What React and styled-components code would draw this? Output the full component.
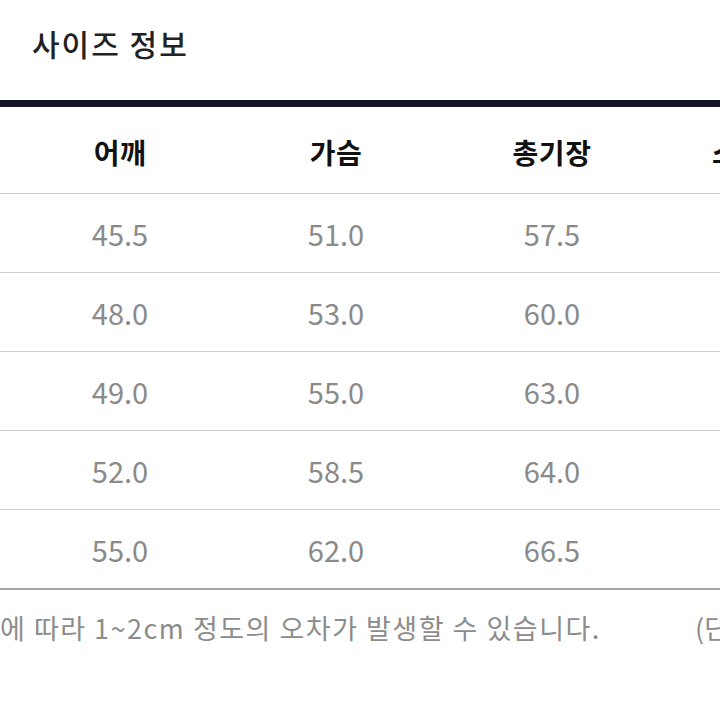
import React from "react";
import styled, { createGlobalStyle } from "styled-components";

const GlobalStyle = createGlobalStyle`
  html, body {
    margin: 0;
    padding: 0;
    background: #ffffff;
  }
  body {
    width: 720px;
    height: 720px;
    overflow: hidden;
    font-family: "Noto Sans CJK KR", "Noto Sans", sans-serif;
  }
`;

const Page = styled.div`
  width: 720px;
  height: 720px;
  overflow: hidden;
  display: flex;
  flex-direction: column;
`;

const Title = styled.h2`
  margin: 0;
  height: 100px;
  box-sizing: border-box;
  padding: 23px 0 0 32px;
  font-size: 30px;
  line-height: 40px;
  font-weight: 500;
  color: #222222;
  letter-spacing: 2px;
`;

const Table = styled.div`
  border-top: 7px solid #14142a;
  border-bottom: 2px solid #a3a3a3;
`;

const Row = styled.div`
  display: grid;
  grid-template-columns: 12px repeat(3, 216px) 1fr;
  height: ${(p) => (p.$head ? "86px" : "79px")};
  border-top: ${(p) => (p.$head ? "none" : "1px solid #cfcfcf")};
  box-sizing: border-box;
  white-space: nowrap;
  overflow: hidden;
`;

const Cell = styled.div`
  display: flex;
  align-items: center;
  justify-content: ${(p) => (p.$edge ? "flex-start" : "center")};
  padding-left: ${(p) => (p.$edge ? "52px" : "0")};
  padding-top: ${(p) => (p.$head ? "3px" : "0")};
  font-size: ${(p) => (p.$head ? "28px" : "29px")};
  font-weight: ${(p) => (p.$head ? 700 : 400)};
  color: ${(p) => (p.$head ? "#111111" : "#8a8a8a")};
  letter-spacing: ${(p) => (p.$head ? "0.5px" : "0")};
`;

const Footer = styled.div`
  display: grid;
  grid-template-columns: 697px 1fr;
  padding-top: 20px;
  font-size: 27px;
  line-height: 36px;
  color: #8c8c8c;
  white-space: nowrap;
  overflow: hidden;
`;

const Notice = styled.span`
  letter-spacing: 1.5px;
`;

const Unit = styled.span`
  margin-left: -2px;
  overflow: hidden;
`;

const heads = ["어깨", "가슴", "총기장"];

const rows = [
  ["45.5", "51.0", "57.5"],
  ["48.0", "53.0", "60.0"],
  ["49.0", "55.0", "63.0"],
  ["52.0", "58.5", "64.0"],
  ["55.0", "62.0", "66.5"],
];

export default function App() {
  return (
    <Page>
      <GlobalStyle />
      <Title>사이즈 정보</Title>
      <Table>
        <Row $head>
          <Cell $head />
          {heads.map((h) => (
            <Cell $head key={h}>
              {h}
            </Cell>
          ))}
          <Cell $head $edge>
            소
          </Cell>
        </Row>
        {rows.map((r, i) => (
          <Row key={i}>
            <Cell />
            {r.map((v, j) => (
              <Cell key={j}>{v}</Cell>
            ))}
            <Cell />
          </Row>
        ))}
      </Table>
      <Footer>
        <Notice>에 따라 1~2cm 정도의 오차가 발생할 수 있습니다.</Notice>
        <Unit>(단</Unit>
      </Footer>
    </Page>
  );
}
